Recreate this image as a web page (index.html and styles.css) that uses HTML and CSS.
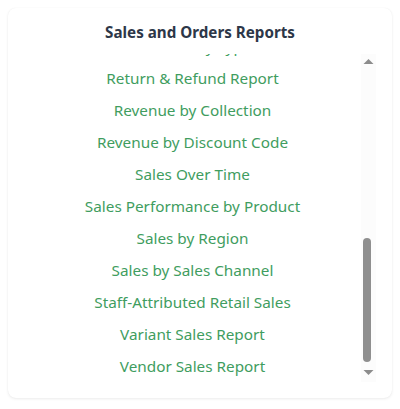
FILE: index.html
```html
<!DOCTYPE html>
<html lang="en">
<head>
<meta charset="utf-8">
<title>Sales and Orders Reports</title>
<link rel="stylesheet" href="styles.css">
</head>
<body>
<div class="card">
  <h2 class="title">Sales and Orders Reports</h2>
  <div class="scroller">
    <ul class="list" id="list">
      <li><a href="#">Average Order Value Over Time</a></li>
      <li><a href="#">Cancelled Orders Report</a></li>
      <li><a href="#">Customer Orders Summary</a></li>
      <li><a href="#">Discount Usage Report</a></li>
      <li><a href="#">Draft Orders Report</a></li>
      <li><a href="#">Fulfillment Status Report</a></li>
      <li><a href="#">Gross Sales Over Time</a></li>
      <li><a href="#">Net Sales by Channel</a></li>
      <li><a href="#">Order Fulfillment Report</a></li>
      <li><a href="#">Orders Over Time</a></li>
      <li><a href="#">Payment Methods Report</a></li>
      <li><a href="#">Product Sales Report</a></li>
      <li><a href="#">Refunds by Type</a></li>
      <li><a href="#">Return &amp; Refund Report</a></li>
      <li><a href="#">Revenue by Collection</a></li>
      <li><a href="#">Revenue by Discount Code</a></li>
      <li><a href="#">Sales Over Time</a></li>
      <li><a href="#">Sales Performance by Product</a></li>
      <li><a href="#">Sales by Region</a></li>
      <li><a href="#">Sales by Sales Channel</a></li>
      <li><a href="#">Staff-Attributed Retail Sales</a></li>
      <li><a href="#">Variant Sales Report</a></li>
      <li><a href="#">Vendor Sales Report</a></li>
    </ul>
    <div class="scrollbar" aria-hidden="true">
      <div class="sb-btn sb-up">
        <svg width="15" height="13" viewBox="0 0 15 13"><polygon points="2.5,10 12.5,10 7.5,5" fill="#8c8c8c"/></svg>
      </div>
      <div class="sb-track"><div class="sb-thumb"></div></div>
      <div class="sb-btn sb-down">
        <svg width="15" height="15" viewBox="0 0 15 15"><polygon points="2.5,3 12.5,3 7.5,8" fill="#8c8c8c"/></svg>
      </div>
    </div>
  </div>
</div>
<script src="script.js"></script>
</body>
</html>
```
FILE: styles.css
```css
html, body {
  margin: 0;
  padding: 0;
  background: #ffffff;
}
body {
  padding: 8px;
  font-family: "Noto Sans", "Open Sans", sans-serif;
}
.card {
  box-sizing: border-box;
  height: 390px;
  background: #ffffff;
  border-radius: 8px;
  box-shadow: 0 1px 3px rgba(0, 0, 0, 0.08), 0 0 1px rgba(0, 0, 0, 0.06);
  padding: 12px 16px 16px;
  display: flex;
  flex-direction: column;
  gap: 10px;
}
.title {
  margin: 0;
  text-align: center;
  font-size: 15.2px;
  line-height: 24px;
  font-weight: 700;
  color: #2d3748;
}
.scroller {
  display: flex;
  height: 328px;
}
.list {
  flex: 1;
  list-style: none;
  margin: 0;
  padding: 0;
  overflow-y: auto;
  scrollbar-width: none;
}
.list::-webkit-scrollbar {
  display: none;
}
.list li {
  text-align: center;
  line-height: 32px;
  font-size: 15.3px;
}
.list a {
  color: #3f9d60;
  text-decoration: none;
}
.scrollbar {
  width: 15px;
  display: flex;
  flex-direction: column;
  background: #fcfcfc;
}
.sb-btn {
  flex: none;
}
.sb-btn svg {
  display: block;
}
.sb-track {
  flex: 1;
  display: flex;
  flex-direction: column;
  justify-content: flex-end;
  padding: 0 0 5px 2px;
}
.sb-thumb {
  width: 8px;
  height: 124px;
  border-radius: 4px;
  background: #8f8f8f;
}
```
FILE: script.js
```js
var l = document.getElementById('list');
l.scrollTop = l.scrollHeight;
```
